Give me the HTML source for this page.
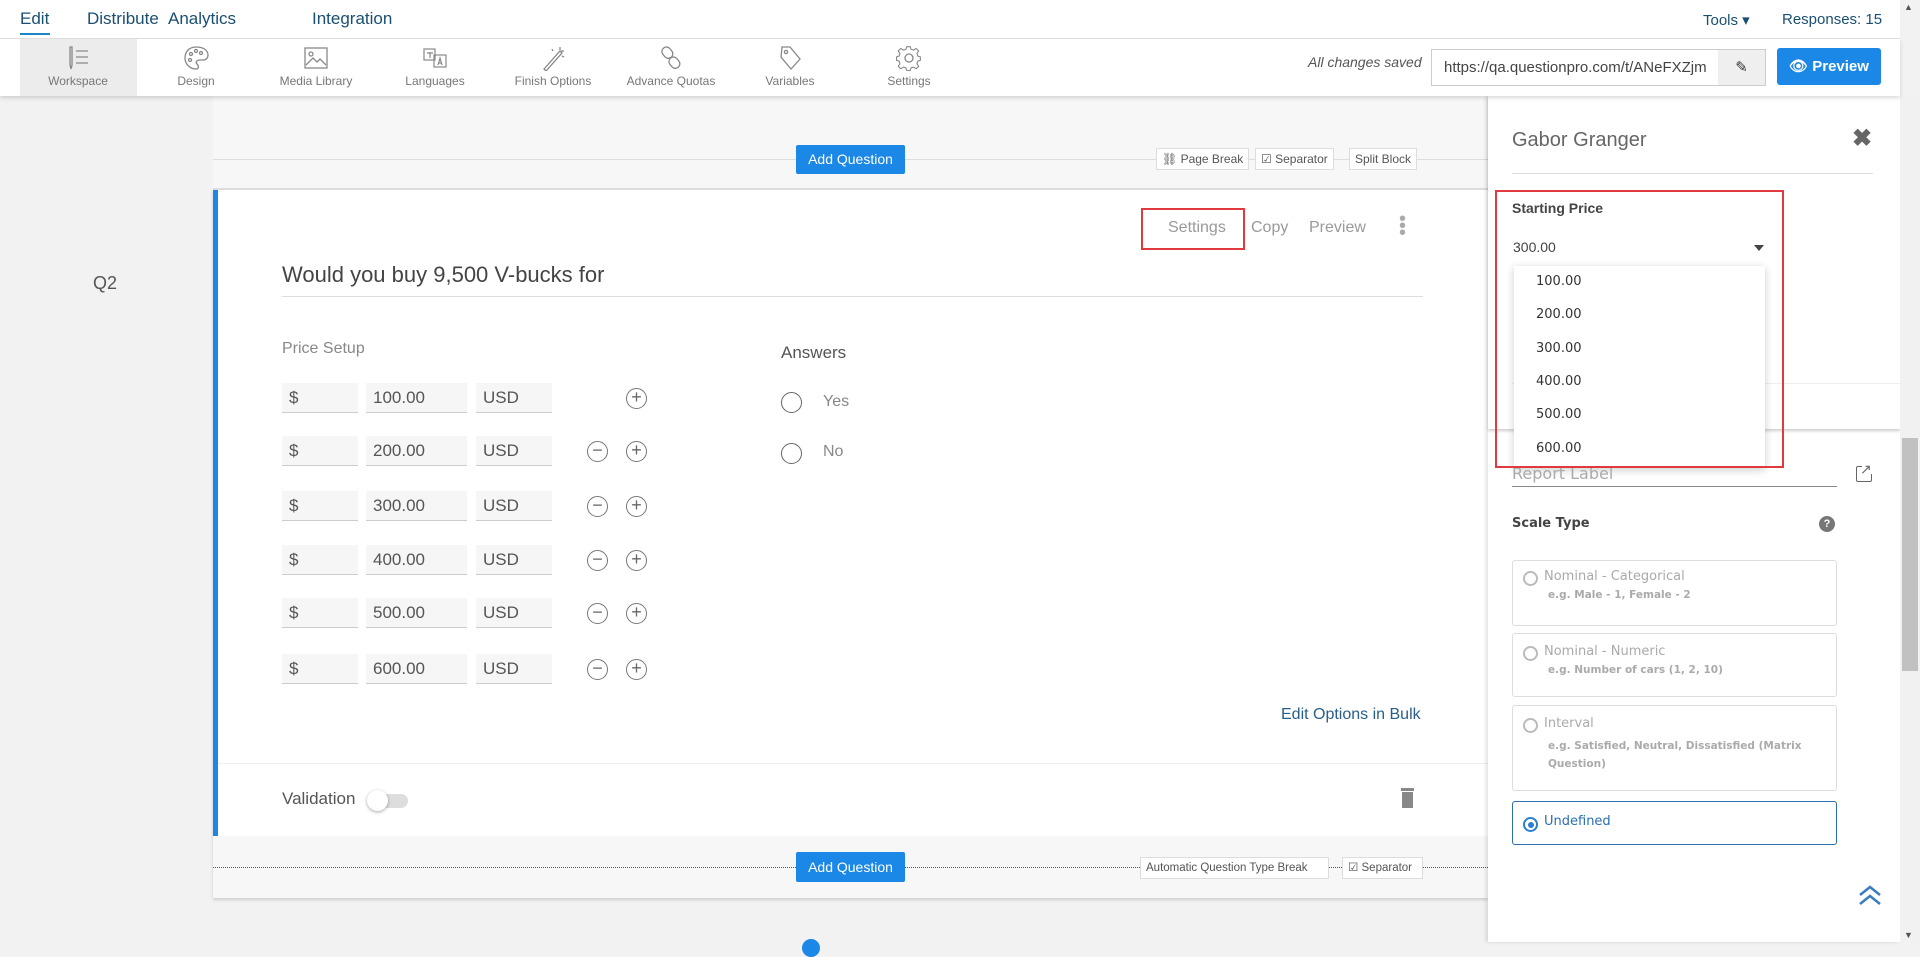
<!DOCTYPE html>
<html><head><meta charset="utf-8">
<style>
*{box-sizing:border-box;margin:0;padding:0}
body{width:1920px;height:942px;overflow:hidden;background:#f2f2f2;font-family:"Liberation Sans",sans-serif;position:relative;color:#444}
.a{position:absolute;white-space:nowrap}
.nav{left:0;top:0;width:1900px;height:39px;background:#fff;border-bottom:1px solid #e2e2e2}
.nt{font-size:17px;color:#1b4f72;top:9px}
.tb{left:0;top:39px;width:1900px;height:57px;background:#fff;box-shadow:0 2px 4px rgba(0,0,0,.15);z-index:3}
.ti{top:0;width:120px;height:57px;text-align:center;font-size:12px;color:#777}
.ti svg{display:block;margin:6px auto 3px}
.inp{background:#f6f6f6;border-bottom:1px solid #ccc;height:30px;font-size:17px;color:#555;padding:5px 7px}
.circ{width:21px;height:21px;border:1.5px solid #777;border-radius:50%;text-align:center;line-height:17px;font-size:18px;color:#666}
.btnsm{border:1px solid #ddd;background:#fff;font-size:12px;color:#555;height:22px;line-height:20px;padding:0 5px}
.blue{background:#1b87e6;color:#fff;font-size:14px;border-radius:2px;text-align:center}
.pf{font-family:"DejaVu Sans",sans-serif}
.box{border:1px solid #ddd;border-radius:3px;left:1512px;width:325px}
.rad{width:15px;height:15px;border:2px solid #bbb;border-radius:50%}
</style></head><body>
<div class="a nav"></div>
<div class="a nt" style="left:20px">Edit</div>
<div class="a" style="left:20px;top:33px;width:30px;height:2px;background:#1b87c9"></div>
<div class="a nt" style="left:87px">Distribute</div>
<div class="a nt" style="left:168px">Analytics</div>
<div class="a nt" style="left:312px">Integration</div>
<div class="a nt" style="left:1703px;font-size:15px;top:11px">Tools ▾</div>
<div class="a nt" style="left:1782px;font-size:15px;top:11px">Responses: 15</div>
<div class="a tb">
 <div class="a" style="left:20px;top:0;width:117px;height:57px;background:#ececec"></div>
 <div class="a ti" style="left:18px"><svg width="30" height="26" viewBox="0 0 30 26" fill="none" stroke="#888" stroke-width="1.3"><path d="M7 2v18l1 4 1-4V2z"/><path d="M13 6h12M13 12h12M13 18h12"/></svg>Workspace</div>
 <div class="a ti" style="left:136px"><svg width="30" height="26" viewBox="0 0 30 26" fill="none" stroke="#888" stroke-width="1.3"><path d="M15 2C8 2 4 7 4 13s5 11 11 11c3 0 3-3 1-5s0-4 3-4h3c3 0 5-2 5-5 0-5-5-8-12-8z"/><circle cx="10" cy="9" r="1.5"/><circle cx="15" cy="6" r="1.5"/><circle cx="20" cy="8" r="1.5"/><circle cx="9" cy="15" r="1.5"/></svg>Design</div>
 <div class="a ti" style="left:256px"><svg width="30" height="26" viewBox="0 0 30 26" fill="none" stroke="#888" stroke-width="1.3"><rect x="4" y="3" width="22" height="20"/><circle cx="10" cy="9" r="2"/><path d="M5 20l7-7 4 4 3-3 6 6"/></svg>Media Library</div>
 <div class="a ti" style="left:375px"><svg width="30" height="26" viewBox="0 0 30 26" fill="none" stroke="#888" stroke-width="1.2"><rect x="4" y="4" width="11" height="11"/><rect x="14" y="10" width="12" height="12"/><path d="M7 8h6M10 7v6M18 20l2-7 2 7M19 18h2"/></svg>Languages</div>
 <div class="a ti" style="left:493px"><svg width="30" height="26" viewBox="0 0 30 26" fill="none" stroke="#888" stroke-width="1.3"><path d="M6 24L22 6l2 2L8 26z"/><path d="M22 2v3M26 6h-3M14 4l1 2M26 12l-2-1"/></svg>Finish Options</div>
 <div class="a ti" style="left:611px"><svg width="30" height="26" viewBox="0 0 30 26" fill="none" stroke="#888" stroke-width="1.3"><rect x="7" y="2" width="9" height="12" rx="4.5" transform="rotate(-40 11 8)"/><rect x="14" y="12" width="9" height="12" rx="4.5" transform="rotate(-40 18 18)"/></svg>Advance Quotas</div>
 <div class="a ti" style="left:730px"><svg width="30" height="26" viewBox="0 0 30 26" fill="none" stroke="#888" stroke-width="1.3"><path d="M7 2h8l10 12-9 10L6 12z"/><circle cx="11" cy="7" r="1.6"/></svg>Variables</div>
 <div class="a ti" style="left:849px"><svg width="30" height="26" viewBox="0 0 30 26" fill="none" stroke="#888" stroke-width="1.3"><path d="M13 2h4l1 3 3 1 3-2 3 3-2 3 1 3 3 1v4l-3 1-1 3 2 3-3 3-3-2-3 1-1 3h-4l-1-3-3-1-3 2-3-3 2-3-1-3-3-1v-4l3-1 1-3-2-3 3-3 3 2 3-1z" transform="scale(.85) translate(2 0)"/><circle cx="15" cy="13" r="4"/></svg>Settings</div>
 <div class="a" style="left:1308px;top:15px;font-size:14px;font-style:italic;color:#555">All changes saved</div>
 <div class="a" style="left:1431px;top:10px;width:335px;height:37px;border:1px solid #ccc;background:#fff;font-size:15px;color:#444;padding:9px 12px;overflow:hidden">https://qa.questionpro.com/t/ANeFXZjm</div>
 <div class="a" style="left:1718px;top:11px;width:47px;height:35px;background:#efefef;text-align:center;line-height:35px;font-size:15px;color:#333">✎</div>
 <div class="a blue" style="left:1777px;top:9px;width:104px;height:37px;line-height:37px;font-weight:bold;font-size:15px;border-radius:3px">👁 Preview</div>
</div>
<div class="a" style="left:93px;top:273px;font-size:18px;color:#555">Q2</div>
<div class="a" style="left:213px;top:96px;width:1275px;height:94px;background:#f7f7f7;border-bottom:2px solid #ddd"></div>
<div class="a" style="left:213px;top:159px;width:1275px;height:1px;background:#ddd"></div>
<div class="a blue" style="left:796px;top:145px;width:109px;height:29px;line-height:29px">Add Question</div>
<div class="a btnsm" style="left:1156px;top:148px">⛓ Page Break</div>
<div class="a btnsm" style="left:1255px;top:148px">☑ Separator</div>
<div class="a btnsm" style="left:1349px;top:148px">Split Block</div>
<div class="a" style="left:213px;top:190px;width:1275px;height:646px;background:#fff;border-left:5px solid #1b87e6;box-shadow:0 2px 3px rgba(0,0,0,.2)"></div>
<div class="a" style="left:1141px;top:208px;width:104px;height:42px;border:2px solid #e0393e"></div>
<div class="a" style="left:1168px;top:219px;font-size:16px;color:#999">Settings</div>
<div class="a" style="left:1251px;top:219px;font-size:16px;color:#999">Copy</div>
<div class="a" style="left:1309px;top:219px;font-size:16px;color:#999">Preview</div>
<div class="a" style="left:1399px;top:216px;width:4px;line-height:7px;font-size:20px;color:#aaa">•<br>•<br>•</div>
<div class="a" style="left:282px;top:262px;font-size:22px;color:#444">Would you buy 9,500 V-bucks for</div>
<div class="a" style="left:282px;top:296px;width:1141px;height:1px;background:#ddd"></div>
<div class="a" style="left:282px;top:340px;font-size:16px;color:#888">Price Setup</div>
<div class="a" style="left:781px;top:343px;font-size:17px;color:#555">Answers</div>

<div class="a inp" style="left:282px;top:383px;width:76px">$</div><div class="a inp" style="left:366px;top:383px;width:101px">100.00</div><div class="a inp" style="left:476px;top:383px;width:76px">USD</div><div class="a circ" style="left:626px;top:388px">+</div>
<div class="a inp" style="left:282px;top:436px;width:76px">$</div><div class="a inp" style="left:366px;top:436px;width:101px">200.00</div><div class="a inp" style="left:476px;top:436px;width:76px">USD</div><div class="a circ" style="left:587px;top:441px">−</div><div class="a circ" style="left:626px;top:441px">+</div>
<div class="a inp" style="left:282px;top:491px;width:76px">$</div><div class="a inp" style="left:366px;top:491px;width:101px">300.00</div><div class="a inp" style="left:476px;top:491px;width:76px">USD</div><div class="a circ" style="left:587px;top:496px">−</div><div class="a circ" style="left:626px;top:496px">+</div>
<div class="a inp" style="left:282px;top:545px;width:76px">$</div><div class="a inp" style="left:366px;top:545px;width:101px">400.00</div><div class="a inp" style="left:476px;top:545px;width:76px">USD</div><div class="a circ" style="left:587px;top:550px">−</div><div class="a circ" style="left:626px;top:550px">+</div>
<div class="a inp" style="left:282px;top:598px;width:76px">$</div><div class="a inp" style="left:366px;top:598px;width:101px">500.00</div><div class="a inp" style="left:476px;top:598px;width:76px">USD</div><div class="a circ" style="left:587px;top:603px">−</div><div class="a circ" style="left:626px;top:603px">+</div>
<div class="a inp" style="left:282px;top:654px;width:76px">$</div><div class="a inp" style="left:366px;top:654px;width:101px">600.00</div><div class="a inp" style="left:476px;top:654px;width:76px">USD</div><div class="a circ" style="left:587px;top:659px">−</div><div class="a circ" style="left:626px;top:659px">+</div>

<div class="a" style="left:781px;top:392px;width:21px;height:21px;border:1.5px solid #666;border-radius:50%"></div>
<div class="a" style="left:823px;top:393px;font-size:16px;color:#888">Yes</div>
<div class="a" style="left:781px;top:443px;width:21px;height:21px;border:1.5px solid #666;border-radius:50%"></div>
<div class="a" style="left:823px;top:443px;font-size:16px;color:#888">No</div>
<div class="a" style="left:1281px;top:706px;font-size:16px;color:#2a5f8a">Edit Options in Bulk</div>
<div class="a" style="left:218px;top:763px;width:1270px;height:1px;background:#eee"></div>
<div class="a" style="left:282px;top:789px;font-size:17px;color:#555">Validation</div>
<div class="a" style="left:370px;top:794px;width:38px;height:14px;border-radius:7px;background:#ddd"></div>
<div class="a" style="left:367px;top:790px;width:21px;height:21px;border-radius:50%;background:#fff;box-shadow:0 1px 3px rgba(0,0,0,.35)"></div>
<div class="a" style="left:1401px;top:788px;width:13px;height:20px"><div style="width:13px;height:3px;background:#888"></div><div style="margin:1px 1px 0;width:11px;height:16px;background:#888"></div></div>
<div class="a" style="left:213px;top:836px;width:1275px;height:62px;background:#f7f7f7;box-shadow:0 2px 3px rgba(0,0,0,.15)"></div>
<div class="a" style="left:213px;top:867px;width:1275px;border-top:1px dotted #555"></div>
<div class="a blue" style="left:796px;top:852px;width:109px;height:30px;line-height:30px">Add Question</div>
<div class="a btnsm" style="left:1140px;top:857px;width:189px;font-size:11.5px">Automatic Question Type Break</div>
<div class="a btnsm" style="left:1342px;top:857px;width:81px;font-size:11.5px">☑ Separator</div>
<div class="a" style="left:802px;top:939px;width:18px;height:18px;border-radius:50%;background:#1b87e6"></div>
<div class="a" style="left:1488px;top:96px;width:412px;height:846px;background:#fff;box-shadow:-2px 0 4px rgba(0,0,0,.12)"></div>
<div class="a" style="left:1488px;top:96px;width:412px;height:333px;background:#fff;box-shadow:0 2px 3px rgba(0,0,0,.2)"></div>
<div class="a" style="left:1900px;top:96px;width:20px;height:846px;background:#f1f1f1"></div>
<div class="a" style="left:1902px;top:438px;width:16px;height:233px;background:#c1c1c1"></div>
<div class="a" style="left:1904px;top:2px;font-size:9px;color:#555">▲</div>
<div class="a" style="left:1904px;top:930px;font-size:9px;color:#555">▼</div>
<div class="a" style="left:1512px;top:129px;font-size:20px;color:#666">Gabor Granger</div>
<div class="a" style="left:1852px;top:124px;font-size:24px;color:#666;font-weight:bold">✖</div>
<div class="a" style="left:1512px;top:173px;width:361px;height:1px;background:#ddd"></div>
<div class="a" style="left:1512px;top:383px;width:388px;height:1px;background:#eee"></div>
<div class="a" style="left:1512px;top:200px;font-size:14px;font-weight:bold;color:#444">Starting Price</div>
<div class="a" style="left:1513px;top:239px;font-size:14px;color:#444">300.00</div>
<div class="a" style="left:1754px;top:245px;border:5px solid transparent;border-top:6px solid #444"></div>
<div class="a pf" style="left:1514px;top:266px;width:251px;height:202px;background:#fff;box-shadow:0 2px 8px rgba(0,0,0,.2);font-size:13px;color:#333">
 <div class="a" style="left:22px;top:8px">100.00</div>
 <div class="a" style="left:22px;top:41px">200.00</div>
 <div class="a" style="left:22px;top:75px">300.00</div>
 <div class="a" style="left:22px;top:108px">400.00</div>
 <div class="a" style="left:22px;top:141px">500.00</div>
 <div class="a" style="left:22px;top:175px">600.00</div>
</div>
<div class="a" style="left:1495px;top:190px;width:289px;height:278px;border:2.5px solid #e0393e"></div>
<div class="a pf" style="left:1512px;top:464px;font-size:16px;color:#aaa;clip-path:inset(4px 0 0 0)">Report Label</div>
<div class="a" style="left:1512px;top:486px;width:325px;height:1px;background:#888"></div>
<div class="a" style="left:1856px;top:466px;width:16px;height:16px;border:1.5px solid #666;border-radius:2px"></div>
<div class="a" style="left:1862px;top:462px;width:12px;height:12px;background:#fff"></div>
<div class="a" style="left:1860px;top:461px;font-size:14px;color:#666">↗</div>
<div class="a pf" style="left:1512px;top:516px;font-size:13px;font-weight:bold;color:#444">Scale Type</div>
<div class="a" style="left:1819px;top:516px;width:16px;height:16px;border-radius:50%;background:#777;color:#fff;font-size:11px;text-align:center;line-height:16px;font-weight:bold">?</div>
<div class="a box" style="top:560px;height:66px"></div>
<div class="a rad" style="left:1523px;top:571px"></div>
<div class="a pf" style="left:1544px;top:569px;font-size:13px;color:#aaa">Nominal - Categorical</div>
<div class="a pf" style="left:1548px;top:589px;font-size:10.5px;color:#aaa;font-weight:bold">e.g. Male - 1, Female - 2</div>
<div class="a box" style="top:633px;height:64px"></div>
<div class="a rad" style="left:1523px;top:646px"></div>
<div class="a pf" style="left:1544px;top:644px;font-size:13px;color:#aaa">Nominal - Numeric</div>
<div class="a pf" style="left:1548px;top:664px;font-size:10.5px;color:#aaa;font-weight:bold">e.g. Number of cars (1, 2, 10)</div>
<div class="a box" style="top:705px;height:86px"></div>
<div class="a rad" style="left:1523px;top:718px"></div>
<div class="a pf" style="left:1544px;top:716px;font-size:13px;color:#aaa">Interval</div>
<div class="a pf" style="left:1548px;top:737px;font-size:10.5px;color:#aaa;font-weight:bold;line-height:18px">e.g. Satisfied, Neutral, Dissatisfied (Matrix<br>Question)</div>
<div class="a box" style="top:801px;height:44px;border-color:#2a6fb0"></div>
<div class="a" style="left:1523px;top:817px;width:15px;height:15px;border:2px solid #2a7fd0;border-radius:50%"><div style="margin:2.5px;width:6px;height:6px;border-radius:50%;background:#2a7fd0"></div></div>
<div class="a pf" style="left:1544px;top:814px;font-size:13px;color:#2a6fb0">Undefined</div>
<svg class="a" style="left:1858px;top:884px" width="24" height="22" viewBox="0 0 24 22" fill="none" stroke="#3a7cc0" stroke-width="2.5"><path d="M2 11l10-8 10 8M2 20l10-8 10 8"/></svg>
</body></html>
